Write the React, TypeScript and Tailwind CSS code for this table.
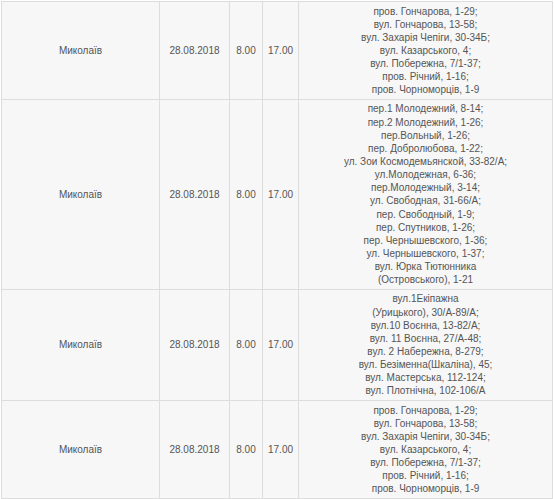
const rows: string[][] = [
  [
    "пров. Гончарова, 1-29;",
    "вул. Гончарова, 13-58;",
    "вул. Захарія Чепіги, 30-34Б;",
    "вул. Казарського, 4;",
    "вул. Побережна, 7/1-37;",
    "пров. Річний, 1-16;",
    "пров. Чорноморців, 1-9",
  ],
  [
    "пер.1 Молодежний, 8-14;",
    "пер.2 Молодежний, 1-26;",
    "пер.Вольный, 1-26;",
    "пер. Добролюбова, 1-22;",
    "ул. Зои Космодемьянской, 33-82/А;",
    "ул.Молодежная, 6-36;",
    "пер.Молодежный, 3-14;",
    "ул. Свободная, 31-66/А;",
    "пер. Свободный, 1-9;",
    "пер. Спутников, 1-26;",
    "пер. Чернышевского, 1-36;",
    "ул. Чернышевского, 1-37;",
    "вул. Юрка Тютюнника",
    "(Островського), 1-21",
  ],
  [
    "вул.1Екіпажна",
    "(Урицького), 30/А-89/А;",
    "вул.10 Воєнна, 13-82/А;",
    "вул. 11 Воєнна, 27/А-48;",
    "вул. 2 Набережна, 8-279;",
    "вул. Безіменна(Шкаліна), 45;",
    "вул. Мастерська, 112-124;",
    "вул. Плотнічна, 102-106/А",
  ],
  [
    "пров. Гончарова, 1-29;",
    "вул. Гончарова, 13-58;",
    "вул. Захарія Чепіги, 30-34Б;",
    "вул. Казарського, 4;",
    "вул. Побережна, 7/1-37;",
    "пров. Річний, 1-16;",
    "пров. Чорноморців, 1-9",
  ],
];

const cell = "border border-[#dddddd] px-1 py-[2.5px] text-center align-middle";

export default function App() {
  return (
    <div className="bg-white w-[554px] h-[499px] overflow-hidden p-px">
      <table
        className="w-[552px] table-fixed border-collapse bg-[#f7f7f7] text-[10px] leading-[13.14px] text-[#555555]"
        style={{ fontFamily: '"Liberation Sans", Arial, sans-serif' }}
      >
        <colgroup>
          <col className="w-[158px]" />
          <col className="w-[70px]" />
          <col className="w-[33px]" />
          <col className="w-[36px]" />
          <col />
        </colgroup>
        <tbody>
          {rows.map((addr, i) => (
            <tr key={i}>
              <td className={cell}>Миколаїв</td>
              <td className={cell}>28.08.2018</td>
              <td className={cell}>8.00</td>
              <td className={cell}>17.00</td>
              <td className={cell}>
                {addr.map((a, j) => (
                  <div key={j}>{a}</div>
                ))}
              </td>
            </tr>
          ))}
        </tbody>
      </table>
    </div>
  );
}
